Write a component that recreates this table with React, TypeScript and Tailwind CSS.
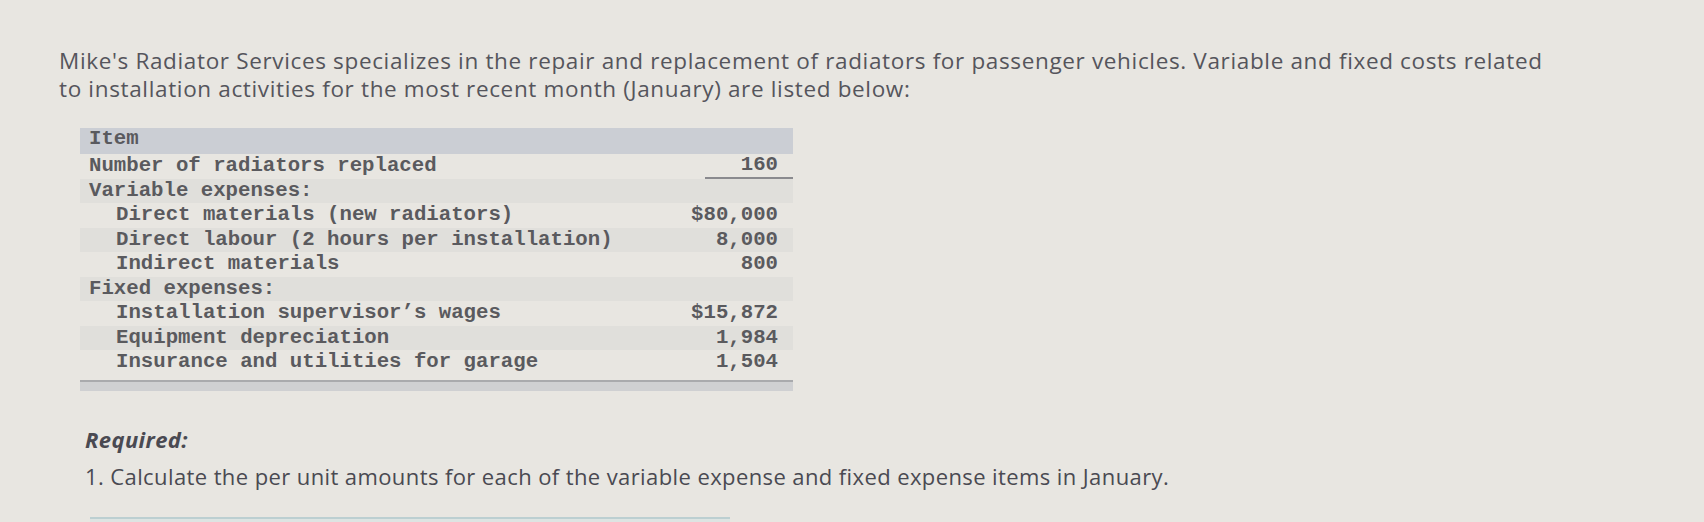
import React from "react";

type Row = {
  label: string;
  value?: string;
  indent?: number;
  shaded?: boolean;
  underline?: boolean;
};

const rows: Row[] = [
  { label: "Number of radiators replaced", value: "160", underline: true },
  { label: "Variable expenses:", shaded: true },
  { label: "Direct materials (new radiators)", value: "$80,000", indent: 1 },
  { label: "Direct labour (2 hours per installation)", value: "8,000", indent: 1, shaded: true },
  { label: "Indirect materials", value: "800", indent: 1 },
  { label: "Fixed expenses:", shaded: true },
  { label: "Installation supervisor’s wages", value: "$15,872", indent: 1 },
  { label: "Equipment depreciation", value: "1,984", indent: 1, shaded: true },
  { label: "Insurance and utilities for garage", value: "1,504", indent: 1 },
];

const sans = { fontFamily: '"Open Sans", "Liberation Sans", Arial, sans-serif' };

export default function App() {
  return (
    <main className="h-[522px] w-[1704px] overflow-hidden bg-[#e8e6e1] text-[#55555c]">
      <p className="pl-[59px] pt-[47px] w-[1680px] text-[22.5px] leading-[28px] tracking-[0.65px]" style={sans}>
        Mike's Radiator Services specializes in the repair and replacement of radiators for passenger vehicles. Variable and fixed costs related
        <br />
        to installation activities for the most recent month (January) are listed below:
      </p>

      {/* cost table */}
      <div
        className="ml-[80px] mt-[25px] w-[713px] font-bold text-[20.7px] text-[#5a5a5e]"
        style={{ fontFamily: '"Liberation Mono", "Courier New", monospace' }}
      >
        <div className="h-[26px] bg-[#cbced4] pl-[9px] leading-[22px]">Item</div>
        {rows.map((r) => (
          <div
            key={r.label}
            className={`flex h-[24.5px] items-center justify-between leading-[24px] ${
              r.shaded ? "bg-[#e0dfdb]" : ""
            }`}
          >
            <span className={r.indent ? "pl-[36px]" : "pl-[9px]"}>{r.label}</span>
            {r.value && (
              <span
                className={`min-w-[88px] pr-[15px] text-right ${
                  r.underline ? "border-b-2 border-[#8a8a8e]" : ""
                }`}
              >
                {r.value}
              </span>
            )}
          </div>
        ))}
        <div className="mt-[5px] h-[11px] border-t-2 border-[#a9aaad] bg-[#cfd0d2]" />
      </div>

      <div className="pl-[85px] mt-[35px] text-[22px] text-[#4a4a52] tracking-[0.4px]" style={sans}>
        <div className="font-bold italic leading-[26px]">Required:</div>
        <div className="mt-[11px] leading-[26px]">
          1. Calculate the per unit amounts for each of the variable expense and fixed expense items in January.
        </div>
      </div>

      <div className="ml-[90px] mt-[28px] h-[20px] w-[640px] border-t-2 border-[#bccfd1] bg-[#dde4e2]" />
    </main>
  );
}
